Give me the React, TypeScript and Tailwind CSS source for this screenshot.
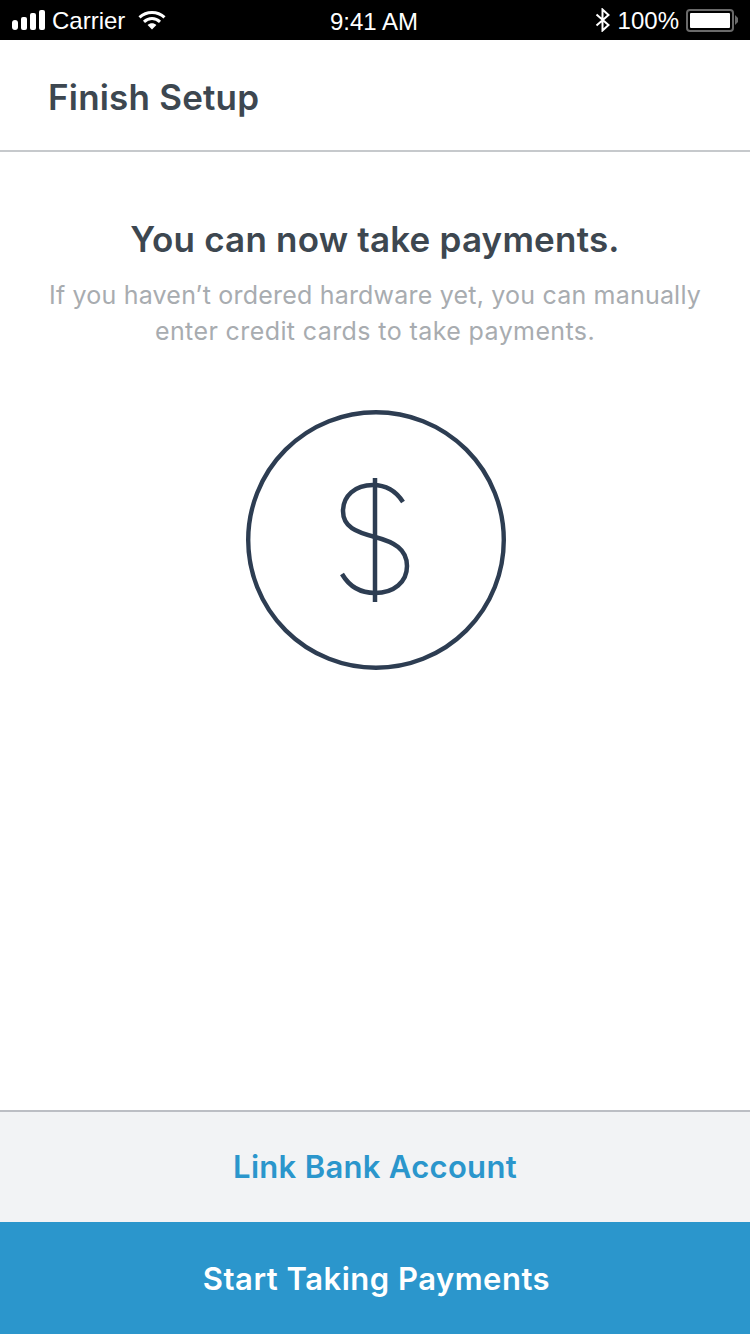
import React from 'react'

function StatusBar() {
  return (
    <div className="relative flex h-10 items-center justify-between bg-black pl-[12px] pr-[11px] font-['Liberation_Sans',sans-serif] text-[24px] text-white">
      <div className="flex items-center">
        <div className="flex h-[20px] items-end gap-[3px]">
          <div className="h-[10px] w-[6px] rounded-[3px] bg-white" />
          <div className="h-[13px] w-[6px] rounded-[2px] bg-white" />
          <div className="h-[17px] w-[6px] rounded-[2px] bg-white" />
          <div className="h-[20px] w-[6px] rounded-[2px] bg-white" />
        </div>
        <span className="ml-[7px] pt-[2px]">Carrier</span>
        <svg className="ml-[13px]" width="28" height="20" viewBox="0 0 28 20" fill="none">
          <path d="M1.5 7.4C8.5 0.8 19.5 0.8 26.5 7.4" stroke="white" strokeWidth="3" />
          <path d="M6 11.8C10.8 7.4 17.2 7.4 22 11.8" stroke="white" strokeWidth="3" />
          <path d="M9.6 15C12.2 12.7 15.8 12.7 18.4 15L14 19.6Z" fill="white" />
        </svg>
      </div>
      <span className="absolute left-[330px] top-[8px] leading-[28px]">9:41 AM</span>
      <div className="flex items-center">
        <svg width="16" height="24" viewBox="0 0 16 24" fill="none">
          <path d="M1.5 6.5L13.5 17L7.5 22.5V1.5L13.5 7L1.5 17.5" stroke="white" strokeWidth="2" />
        </svg>
        <span className="ml-[7px] pt-[2px]">100%</span>
        <div className="ml-[7px] flex items-center">
          <div className="flex h-[23px] w-[48px] items-center justify-center rounded-[4px] border-2 border-[#6a6a6a]">
            <div className="h-[15px] w-[40px] rounded-[1px] bg-white" />
          </div>
          <svg className="ml-[1px]" width="4" height="10" viewBox="0 0 4 10">
            <path d="M0 0L3 3V7L0 10Z" fill="#6a6a6a" />
          </svg>
        </div>
      </div>
    </div>
  )
}

function DollarCircle() {
  return (
    <svg className="ml-[1px]" width="260" height="260" viewBox="0 0 260 260" fill="none">
      <circle cx="130" cy="130" r="127.8" stroke="#2d3d52" strokeWidth="4.4" />
      <path d="M129 68V192" stroke="#2d3d52" strokeWidth="4.5" />
      <path
        d="M157 92C150 81 140 75 127 75C109 75 97 86 97 101C97 117 110 122 129 127C148 132 161 139 161 156C161 172 148 183 129 183C114 183 103 176 96 164"
        stroke="#2d3d52"
        strokeWidth="4.5"
      />
    </svg>
  )
}

export default function App() {
  return (
    <div className="flex h-[1334px] w-[750px] flex-col bg-white font-['Inter',sans-serif]">
      <StatusBar />
      <header className="flex h-[112px] items-center border-b-2 border-[#c6c9cc] pt-[4px] pl-[48px]">
        <h1 className="text-[35px] font-semibold tracking-[0.2px] text-[#3d4750]">Finish Setup</h1>
      </header>
      <main className="flex flex-1 flex-col items-center">
        <h2 className="mt-[65px] text-[35px] font-semibold leading-[44px] tracking-[0.2px] text-[#3d4750]">You can now take payments.</h2>
        <p className="mt-[16px] text-center text-[25px] leading-[36px] tracking-[0.2px] text-[#a8acb0]">
          If you haven’t ordered hardware yet, you can manually
          <br />
          <span className="tracking-[0.4px]">enter credit cards to take payments.</span>
        </p>
        <div className="mt-[61px]">
          <DollarCircle />
        </div>
      </main>
      <button className="flex h-[112px] items-center justify-center border-t-2 border-[#bcbec4] bg-[#f2f3f5] text-[31px] font-semibold tracking-[0.3px] text-[#2b96cc]">
        Link Bank Account
      </button>
      <button className="flex h-[112px] items-center justify-center bg-[#2b96cc] pt-[2px] pl-[3px] text-[31px] font-semibold tracking-[0.5px] text-white">
        Start Taking Payments
      </button>
    </div>
  )
}
